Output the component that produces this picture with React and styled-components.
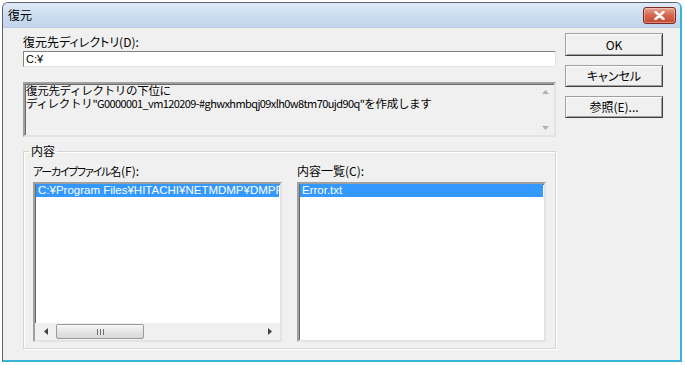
import React from "react";
import styled, { createGlobalStyle } from "styled-components";

const GlobalStyle = createGlobalStyle`
  html, body {
    margin: 0;
    padding: 0;
    background: #ffffff;
  }
  * {
    box-sizing: border-box;
  }
  body {
    font-family: "Liberation Sans", "Noto Sans CJK JP", sans-serif;
    font-size: 12px;
    color: #000000;
  }
`;

const Window = styled.div`
  width: 680px;
  height: 360px;
  margin: 2px 0 0 2px;
  display: flex;
  flex-direction: column;
  border: 1px solid #5b6470;
  border-right: 2px solid #38b4d8;
  border-bottom: 2px solid #38b4d8;
  border-radius: 6px 6px 0 0;
  overflow: hidden;
  background: #f0f0f0;
`;

const TitleBar = styled.div`
  height: 25px;
  display: flex;
  align-items: center;
  justify-content: space-between;
  padding: 0 4px 0 5px;
  background: linear-gradient(#dfeaf7, #c9dbef 60%, #c2d5ec);
  border-bottom: 1px solid #b9cbe1;
`;

const Title = styled.span`
  font-family: "Noto Sans CJK JP", sans-serif;
  font-size: 12px;
  line-height: 12px;
`;

const CloseButton = styled.div`
  width: 33px;
  height: 17px;
  margin-top: 1px;
  border: 1px solid #7a2a20;
  border-radius: 3px;
  background: linear-gradient(#e8a490, #d4644c 50%, #c44a34);
  display: flex;
  align-items: center;
  justify-content: center;
  box-shadow: inset 0 0 0 1px rgba(255, 255, 255, 0.35);
`;

const Body = styled.div`
  flex: 1;
  display: flex;
  gap: 9px;
  padding: 5px 0 0 20px;
`;

const LeftColumn = styled.div`
  width: 533px;
  display: flex;
  flex-direction: column;
`;

const Label = styled.div`
  font-family: "Noto Sans CJK JP", sans-serif;
  font-feature-settings: "palt" 1;
  font-size: 12px;
  line-height: 12px;
  height: 12px;
  margin-top: ${(p) => p.$top || 0}px;
  white-space: nowrap;
`;

const Squeeze = styled.span`
  font-size: 11px;
  letter-spacing: -1.2px;
  margin-right: 1px;
`;

const TextInput = styled.div`
  height: 16px;
  margin-top: 3px;
  background: #ffffff;
  border: 1px solid #e3e3e3;
  border-top-color: #828282;
  border-left-color: #828282;
  padding: 1px 2px;
  font-size: 11px;
  line-height: 12px;
`;

const MessageBox = styled.div`
  height: 55px;
  margin-top: 15px;
  display: flex;
  border: 2px solid #ffffff;
  border-top-color: #a0a0a0;
  border-left-color: #a0a0a0;
  border-bottom-color: #e3e3e3;
  border-right-color: #e3e3e3;
  box-shadow: inset 1px 1px 0 #696969;
`;

const MessageText = styled.div`
  flex: 1;
  padding: 0 0 0 1px;
  font-family: "Noto Sans CJK JP", sans-serif;
  font-size: 11.5px;
  line-height: 13px;
  letter-spacing: -0.3px;
  white-space: nowrap;
  overflow: hidden;
`;

const Narrow = styled.span`
  font-size: 11px;
  letter-spacing: -0.6px;
`;

const VScroll = styled.div`
  width: 17px;
  display: flex;
  flex-direction: column;
  justify-content: space-between;
  align-items: center;
  padding: 6px 0 5px;
`;

const Group = styled.fieldset`
  height: 204px;
  margin: 8px 0 0 0;
  padding: 8px 9px 6px 9px;
  border: 1px solid #d5d5d5;
  box-shadow: inset 1px 1px 0 #ffffff, 1px 1px 0 #ffffff;
  display: flex;
  gap: 15px;
  min-width: 0;
`;

const Legend = styled.legend`
  font-family: "Noto Sans CJK JP", sans-serif;
  font-size: 12px;
  line-height: 12px;
  padding: 0 2px;
  margin-left: -4px;
`;

const ListColumn = styled.div`
  width: 249px;
  display: flex;
  flex-direction: column;
`;

const ListBox = styled.div`
  height: 160px;
  margin-top: 5px;
  background: #ffffff;
  display: flex;
  flex-direction: column;
  border: 2px solid #ffffff;
  border-top-color: #a0a0a0;
  border-left-color: #a0a0a0;
  border-bottom-color: #e3e3e3;
  border-right-color: #e3e3e3;
  box-shadow: inset 1px 1px 0 #696969;
  overflow: hidden;
`;

const ListItems = styled.div`
  flex: 1;
  padding: 0 1px;
`;

const ListRow = styled.div`
  height: 13px;
  padding-left: 2px;
  background: ${(p) => (p.$selected ? "#3399ff" : "transparent")};
  color: ${(p) => (p.$selected ? "#ffffff" : "#000000")};
  font-size: 11.5px;
  line-height: 13px;
  white-space: nowrap;
  overflow: hidden;
`;

const HScroll = styled.div`
  height: 17px;
  display: flex;
  align-items: center;
  background: #f0f0f0;
  padding: 0 2px;
`;

const ArrowCell = styled.div`
  width: 17px;
  display: flex;
  justify-content: center;
  align-items: center;
`;

const Thumb = styled.div`
  width: 88px;
  height: 15px;
  margin-left: 2px;
  border: 1px solid #9a9a9a;
  border-radius: 2px;
  background: linear-gradient(#f6f6f6, #e6e6e6 50%, #d8d8d8);
  display: flex;
  justify-content: center;
  align-items: center;
  gap: 2px;
`;

const Grip = styled.span`
  width: 1px;
  height: 6px;
  background: #6e6e6e;
`;

const ScrollTrack = styled.div`
  flex: 1;
`;

const ButtonColumn = styled.div`
  width: 98px;
  display: flex;
  flex-direction: column;
  gap: 9px;
`;

const Button = styled.div`
  height: ${(p) => p.$height || 22}px;
  display: flex;
  align-items: center;
  justify-content: center;
  background: #f0f0f0;
  border: 1px solid #a0a0a0;
  border-right-color: #404040;
  border-bottom-color: #404040;
  box-shadow: inset 1px 1px 0 #ffffff, inset -1px -1px 0 #a0a0a0;
  font-family: "Noto Sans CJK JP", sans-serif;
  font-feature-settings: "palt" 1;
  font-size: 12px;
  line-height: 12px;
`;

function Triangle({ dir, color }) {
  const pts = {
    up: "0,4 3.5,0 7,4",
    down: "0,0 3.5,4 7,0",
    left: "4,0 0,3.5 4,7",
    right: "0,0 4,3.5 0,7",
  }[dir];
  const vertical = dir === "up" || dir === "down";
  return (
    <svg width={vertical ? 7 : 4} height={vertical ? 4 : 7}>
      <polygon points={pts} fill={color} />
    </svg>
  );
}

export default function App() {
  return (
    <>
      <GlobalStyle />
      <Window>
        <TitleBar>
          <Title>復元</Title>
          <CloseButton>
            <svg width="11" height="9" viewBox="0 0 11 9">
              <path
                d="M1.5 1 L9.5 8 M9.5 1 L1.5 8"
                stroke="#ffffff"
                strokeWidth="2.4"
                strokeLinecap="round"
              />
            </svg>
          </CloseButton>
        </TitleBar>
        <Body>
          <LeftColumn>
            <Label $top={3}>復元先ディレクトリ(D):</Label>
            <TextInput>C:¥</TextInput>
            <MessageBox>
              <MessageText>
                復元先ディレクトリの下位に
                <br />
                ディレクトリ<Narrow>"G0000001_vm120209-#ghwxhmbqj09xlh0w8tm70ujd90q"</Narrow>を作成します
              </MessageText>
              <VScroll>
                <Triangle dir="up" color="#b0b0b0" />
                <Triangle dir="down" color="#b0b0b0" />
              </VScroll>
            </MessageBox>
            <Group>
              <Legend>内容</Legend>
              <ListColumn>
                <Label>
                  <Squeeze>アーカイブファイル名</Squeeze>(F):
                </Label>
                <ListBox>
                  <ListItems>
                    <ListRow $selected>C:¥Program Files¥HITACHI¥NETMDMP¥DMPRI</ListRow>
                  </ListItems>
                  <HScroll>
                    <ArrowCell>
                      <Triangle dir="left" color="#404040" />
                    </ArrowCell>
                    <Thumb>
                      <Grip />
                      <Grip />
                      <Grip />
                    </Thumb>
                    <ScrollTrack />
                    <ArrowCell>
                      <Triangle dir="right" color="#404040" />
                    </ArrowCell>
                  </HScroll>
                </ListBox>
              </ListColumn>
              <ListColumn>
                <Label>内容一覧(C):</Label>
                <ListBox>
                  <ListItems>
                    <ListRow $selected>Error.txt</ListRow>
                  </ListItems>
                </ListBox>
              </ListColumn>
            </Group>
          </LeftColumn>
          <ButtonColumn>
            <Button $height={23}>OK</Button>
            <Button>キャンセル</Button>
            <Button>参照(E)...</Button>
          </ButtonColumn>
        </Body>
      </Window>
    </>
  );
}
